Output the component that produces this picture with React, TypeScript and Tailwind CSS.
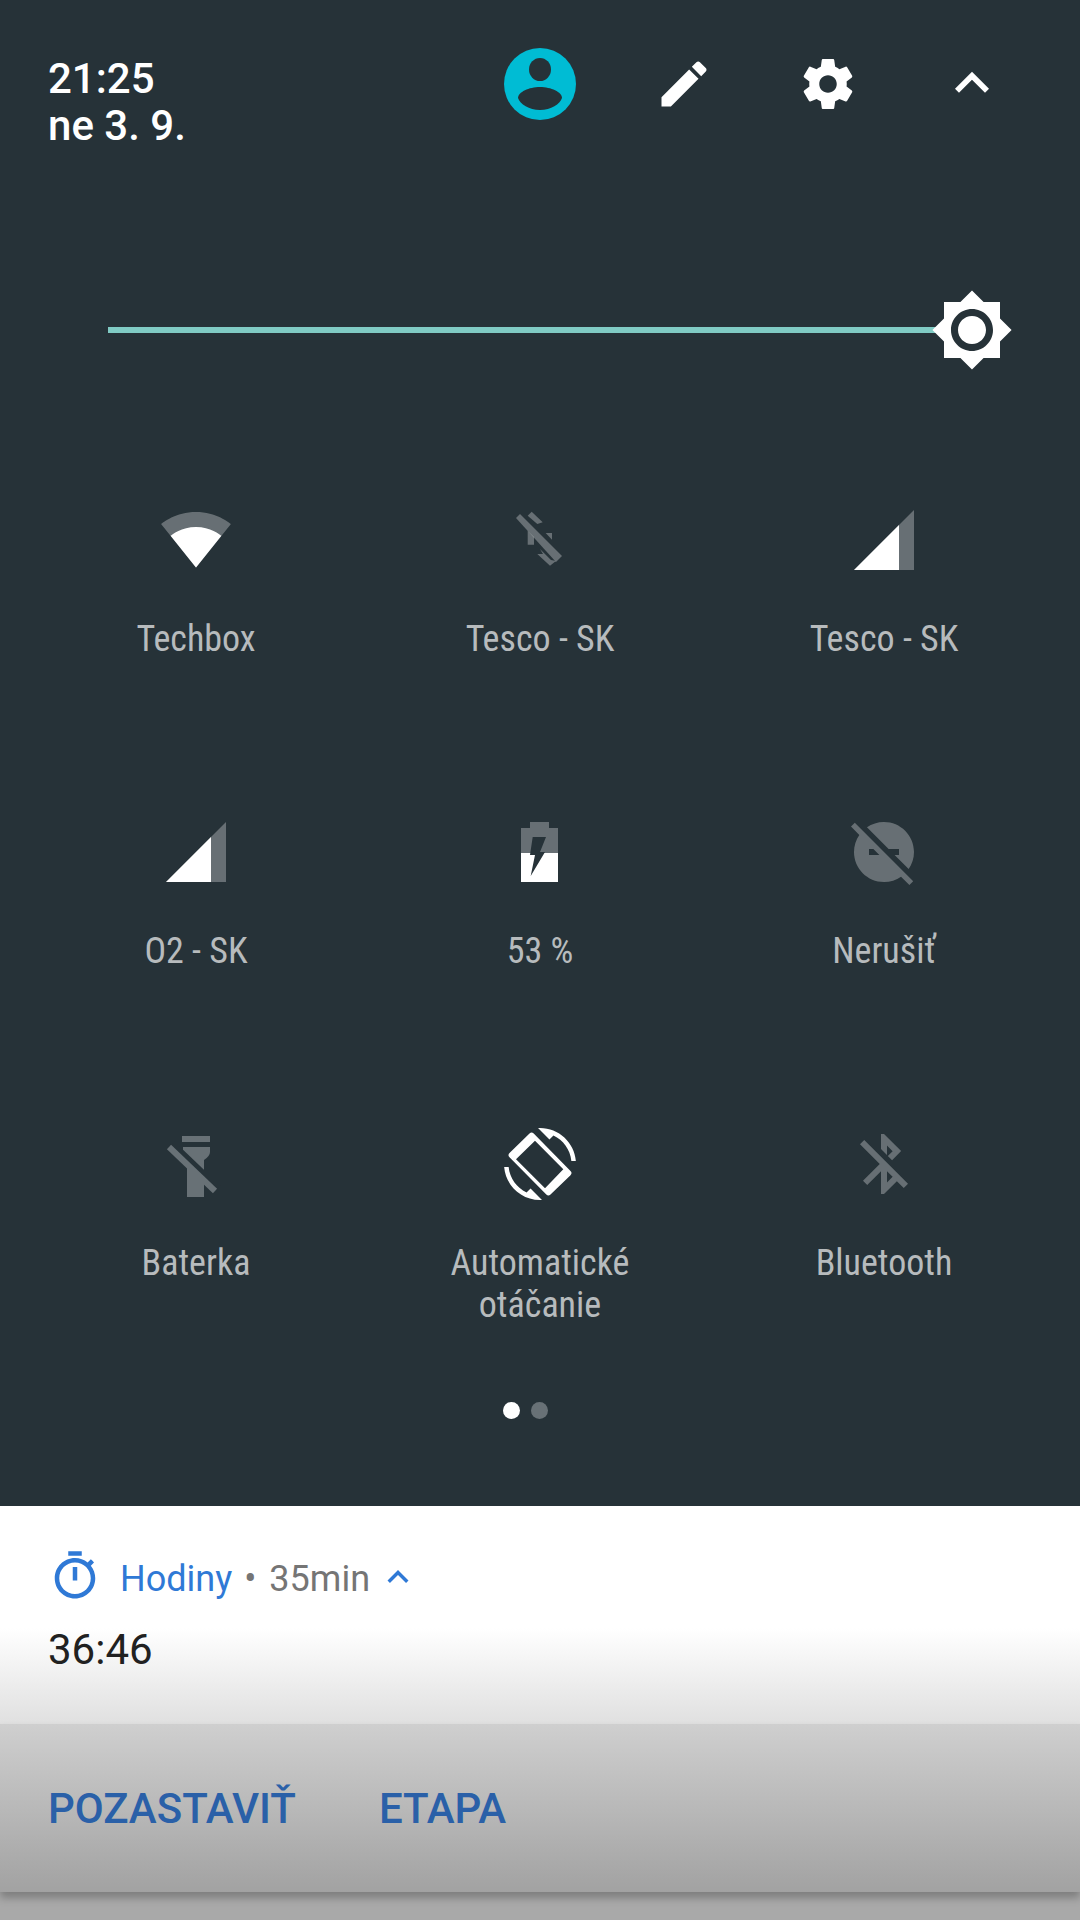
import React from 'react';

const BG = '#263238';

const Wifi = () => (
  <svg viewBox="0 0 24 24" className="w-[72px] h-[72px] -mt-[1px] mb-[1px]" fill="#fff">
    <path fillOpacity={0.3} d="M12.01 21.49L23.64 7c-.45-.34-4.93-4-11.64-4C5.28 3 .81 6.66.36 7l11.63 14.49.01.01.01-.01z" />
    <path d="M3.53 10.95l8.46 10.54.01.01.01-.01 8.46-10.54C20.04 10.62 16.81 8 12 8c-4.81 0-8.04 2.62-8.47 2.95z" />
  </svg>
);

const Signal = () => (
  <svg viewBox="0 0 24 24" className="w-[72px] h-[72px]" fill="#fff">
    <path fillOpacity={0.3} d="M2 22h20V2z" />
    <path d="M17 7L2 22h15V7z" />
  </svg>
);

const DataOff = () => (
  <svg viewBox="0 0 72 72" className="w-[72px] h-[72px]" fill="#fff" fillOpacity={0.3}>
    <polygon points="12,14 16,10 58,52 52,58" />
    <polygon points="27.7,7.7 38.7,18.3 33.3,20 23.7,11.7" />
    <polygon points="41.7,29 48,29 48,35.7" />
    <polygon points="23.7,26.7 30,33 30,40.7 23.7,40.7" />
    <polygon points="33.3,50 39,50 36,45 47,56 52,57 46,61.7" />
  </svg>
);

const Battery = () => (
  <svg viewBox="0 0 72 72" className="w-[72px] h-[72px]">
    <path fill="#fff" fillOpacity={0.3} d="M17 12h9V6h19v6h9v25H17z" />
    <path fill="#fff" d="M17 37h37v29H17z" />
    <polygon fill={BG} points="28.7,21 42,21 36,36 41,36 26.7,60 31,39 26,39" />
  </svg>
);

const DndOff = () => (
  <svg viewBox="0 0 24 24" className="w-[72px] h-[72px]" fill="#fff" fillOpacity={0.3}>
    <path d="M17 11v2h-1.46l4.68 4.68C21.34 16.07 22 14.11 22 12c0-5.52-4.48-10-10-10-2.11 0-4.07.66-5.68 1.78L13.54 11H17zM2.27 2.27L1 3.54l2.78 2.78C2.66 7.93 2 9.89 2 12c0 5.52 4.48 10 10 10 2.11 0 4.07-.66 5.68-1.78L20.46 23l1.27-1.27L11 11 2.27 2.27zM7 13v-2h1.46l2 2H7z" />
  </svg>
);

const FlashlightOff = () => (
  <svg viewBox="0 0 72 72" className="w-[72px] h-[72px]">
    <rect x="22" y="8" width="28" height="6" fill="#687176" />
    <path fill="#687176" d="M23 19H50V24Q50 28 44 32V69H27V36L23 28z" />
    <line x1="12" y1="16" x2="58" y2="60" stroke={BG} strokeWidth="7" />
    <line x1="9" y1="19" x2="55" y2="63" stroke="#687176" strokeWidth="6" />
  </svg>
);

const Rotation = () => (
  <svg viewBox="0 0 72 72" className="w-[72px] h-[72px]" fill="#fff">
    <g transform="scale(3)">
      <path d="M16.48 2.52c3.27 1.55 5.61 4.72 5.97 8.48h1.5C23.44 4.84 18.29 0 12 0l-.66.03 3.81 3.81 1.33-1.32zM7.52 21.48C4.25 19.94 1.91 16.76 1.55 13H.05C.56 19.16 5.71 24 12 24l.66-.03-3.81-3.81-1.33 1.32z" />
    </g>
    <path
      fillRule="evenodd"
      d="M25.5 5.5a3 3 0 0 1 4.2 0L66.5 43a3 3 0 0 1 0 4.2L46.500 66.500a3 3 0 0 1-4.200 0L5.500 29.300a3 3 0 0 1 0-4.200zM31 12.700L12 31.300 41 60.300 59.300 41.300z"
    />
  </svg>
);

const BluetoothOff = () => (
  <svg viewBox="0 0 24 24" className="w-[72px] h-[72px]" fill="#fff" fillOpacity={0.3}>
    <path d="M13 5.83l1.88 1.88-1.6 1.6 1.41 1.41 3.02-3.02L12 2h-1v5.03l2 2v-3.2zM5.41 4L4 5.41 10.59 12 5 17.59 6.41 19 11 14.41V22h1l4.29-4.29 2.3 2.29L20 18.59 5.41 4zM13 18.17v-3.76l1.88 1.88L13 18.17z" />
  </svg>
);

const TILES = [
  { label: 'Techbox', icon: <Wifi /> },
  { label: 'Tesco - SK', icon: <DataOff /> },
  { label: 'Tesco - SK', icon: <Signal /> },
  { label: 'O2 - SK', icon: <Signal /> },
  { label: '53 %', icon: <Battery /> },
  { label: 'Nerušiť', icon: <DndOff /> },
  { label: 'Baterka', icon: <FlashlightOff /> },
  { label: 'Automatické otáčanie', icon: <Rotation /> },
  { label: 'Bluetooth', icon: <BluetoothOff /> },
];

export default function App() {
  return (
    <div className="w-[1080px] h-[1920px] overflow-hidden bg-[#a9a9a9] font-['Roboto',sans-serif]">
      <div className="h-[1506px] bg-[#263238]">
        {/* Header */}
        <div className="h-[288px] flex justify-between items-start pt-[48px] pl-[48px] pr-[36px]">
          <div className="pt-[7px] text-[42px] leading-[47px] font-medium text-white">
            <div>21:25</div>
            <div>ne 3. 9.</div>
          </div>
          <div className="flex">
            <div className="w-[144px] h-[72px] flex items-center justify-center">
              <svg viewBox="0 0 72 72" className="w-[72px] h-[72px]">
                <circle cx="36" cy="36" r="36" fill="#00bcd4" />
                <ellipse cx="36" cy="21.5" rx="11" ry="11.5" fill={BG} />
                <path d="M14 50C14 44 25 39 36 39S58 44 58 50C56 56 47 62 36 62S16 56 14 50z" fill={BG} />
              </svg>
            </div>
            <div className="w-[144px] h-[72px] flex items-center justify-center">
              <svg viewBox="0 0 24 24" className="w-[60px] h-[60px]" fill="#fff">
                <path d="M3 17.25V21h3.75L17.81 9.94l-3.75-3.75L3 17.25zM20.71 7.04c.39-.39.39-1.02 0-1.41l-2.34-2.34c-.39-.39-1.02-.39-1.41 0l-1.83 1.83 3.75 3.75 1.83-1.83z" />
              </svg>
            </div>
            <div className="w-[144px] h-[72px] flex items-center justify-center">
              <svg viewBox="0 0 24 24" className="w-[60px] h-[60px]" fill="#fff">
                <path d="M19.43 12.98c.04-.32.07-.64.07-.98s-.03-.66-.07-.98l2.11-1.65c.19-.15.24-.42.12-.64l-2-3.46c-.12-.22-.39-.3-.61-.22l-2.49 1c-.52-.4-1.08-.73-1.69-.98l-.38-2.65C14.46 2.18 14.25 2 14 2h-4c-.25 0-.46.18-.49.42l-.38 2.65c-.61.25-1.17.59-1.69.98l-2.49-1c-.23-.09-.49 0-.61.22l-2 3.46c-.13.22-.07.49.12.64l2.11 1.65c-.04.32-.07.65-.07.98s.03.66.07.98l-2.11 1.65c-.19.15-.24.42-.12.64l2 3.46c.12.22.39.3.61.22l2.49-1c.52.4 1.08.73 1.69.98l.38 2.65c.03.24.24.42.49.42h4c.25 0 .46-.18.49-.42l.38-2.65c.61-.25 1.17-.59 1.69-.98l2.49 1c.23.09.49 0 .61-.22l2-3.46c.12-.22.07-.49-.12-.64l-2.11-1.65zM12 15.5c-1.93 0-3.5-1.57-3.5-3.5s1.57-3.5 3.5-3.5 3.5 1.57 3.5 3.5-1.57 3.5-3.5 3.5z" />
              </svg>
            </div>
            <div className="w-[144px] h-[72px] flex items-center justify-center">
              <svg viewBox="0 0 24 24" className="w-[68px] h-[68px] -mt-[3px]" fill="#fff">
                <path d="M12 8l-6 6 1.41 1.41L12 10.83l4.59 4.58L18 14z" />
              </svg>
            </div>
          </div>
        </div>

        {/* Brightness slider */}
        <div className="h-[84px] pl-[108px] pr-[108px] flex items-center">
          <div className="relative w-full h-[6px] bg-[#80cbc4]">
            <svg viewBox="0 0 24 24" className="absolute -right-[42px] -top-[39px] w-[84px] h-[84px]" fill="#fff">
              <circle cx="12" cy="12" r="7" fill={BG} />
              <path d="M20 8.69V4h-4.69L12 .69 8.69 4H4v4.69L.69 12 4 15.31V20h4.69L12 23.31 15.31 20H20v-4.69L23.31 12 20 8.69zM12 18c-3.31 0-6-2.69-6-6s2.69-6 6-6 6 2.69 6 6-2.69 6-6 6zm0-10c-2.21 0-4 1.79-4 4s1.79 4 4 4 4-1.79 4-4-1.79-4-4-4z" />
            </svg>
          </div>
        </div>

        {/* Quick settings tiles */}
        <div className="mt-[132px] px-[24px] grid grid-cols-3 grid-rows-[312px_312px_auto]">
          {TILES.map((tile, i) => (
            <div key={i} className="flex flex-col items-center">
              {tile.icon}
              <div className="mt-[42px] w-[260px] text-center text-[36px] leading-[42px] text-[#b7bbbd] [font-stretch:condensed]">
                {tile.label}
              </div>
            </div>
          ))}
        </div>

        {/* Page dots */}
        <div className="mt-[76px] ml-[503px] flex gap-[11px]">
          <div className="w-[17px] h-[17px] rounded-full bg-white" />
          <div className="w-[17px] h-[17px] rounded-full bg-[#687176]" />
        </div>
      </div>

      {/* Notification */}
      <div className="h-[218px] pl-[48px] pt-[43px] bg-[linear-gradient(to_bottom,#ffffff_0px,#ffffff_122px,#e0e0e0_218px)]">
        <div className="flex items-center h-[54px] text-[36px] leading-[54px]">
          <svg viewBox="0 0 24 24" className="w-[54px] h-[54px]" fill="#2f79d6">
            <path d="M15 1H9v2h6V1zm-4 13h2V8h-2v6zm8.03-6.61l1.42-1.42c-.43-.51-.9-.99-1.41-1.41l-1.42 1.42C16.07 4.74 14.12 4 12 4c-4.97 0-9 4.03-9 9s4.02 9 9 9 9-4.03 9-9c0-2.12-.74-4.07-1.97-5.61zM12 20c-3.87 0-7-3.13-7-7s3.13-7 7-7 7 3.13 7 7-3.13 7-7 7z" />
          </svg>
          <span className="ml-[18px] pt-[5px] text-[#2f79d6]">Hodiny</span>
          <span className="ml-[12px] pt-[5px] text-[#757575]">•</span>
          <span className="ml-[13px] pt-[5px] text-[#757575]">35min</span>
          <svg viewBox="0 0 24 24" className="w-[42px] h-[42px] ml-[7px] mt-[1px]" fill="#2f79d6">
            <path d="M12 8l-6 6 1.41 1.41L12 10.83l4.59 4.58L18 14z" />
          </svg>
        </div>
        <div className="mt-[22px] text-[42px] leading-[50px] text-[#212121]">36:46</div>
      </div>

      {/* Actions */}
      <div className="h-[168px] pl-[48px] flex items-center gap-[83px] text-[42px] font-medium text-[#2a60a8] bg-[linear-gradient(to_bottom,#cfcfcf,#a2a2a2)] shadow-[0_6px_8px_rgba(0,0,0,0.25)]">
        <span>POZASTAVIŤ</span>
        <span>ETAPA</span>
      </div>
    </div>
  );
}
